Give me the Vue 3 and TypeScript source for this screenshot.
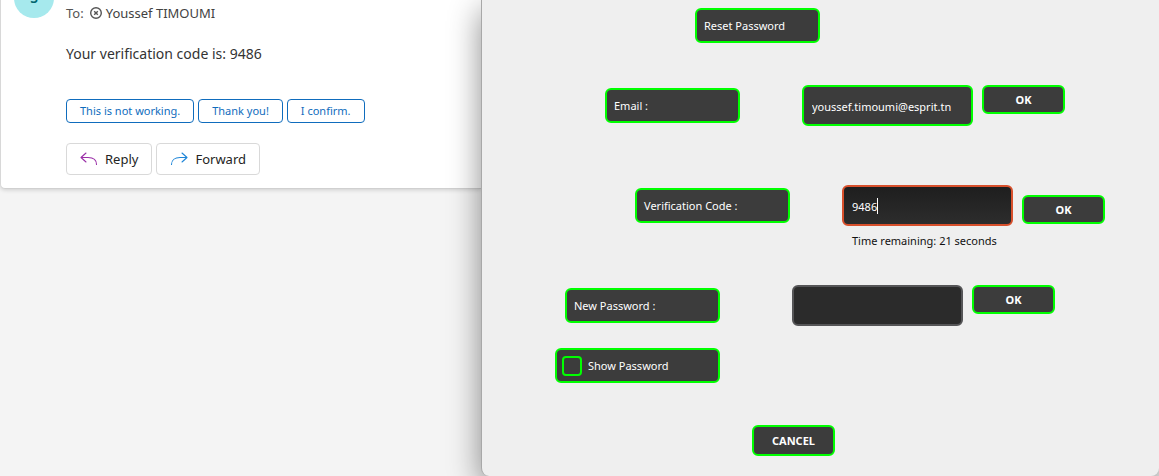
<script setup lang="ts">
import { ref } from 'vue'

const suggestions: string[] = ['This is not working.', 'Thank you!', 'I confirm.']
const email = ref('youssef.timoumi@esprit.tn')
const code = ref('9486')
const password = ref('')
const showPassword = ref(false)
const remaining = ref(21)
</script>

<template>
  <div class="screen">
    <main class="mail">
      <article class="card">
        <span class="avatar">S</span>
        <div class="message">
          <p class="to">
            <span>To:</span>
            <svg class="presence" viewBox="0 0 12 12" aria-hidden="true">
              <circle cx="6" cy="6" r="5.3" />
              <path d="M4.200 4.200l3.600 3.600M7.800 4.200l-3.600 3.600" />
            </svg>
            <span class="name">Youssef TIMOUMI</span>
          </p>
          <p class="body">Your verification code is: 9486</p>
          <div class="suggestions">
            <button v-for="s in suggestions" :key="s" type="button" class="chip">{{ s }}</button>
          </div>
          <div class="actions">
            <button type="button" class="action">
              <svg class="reply" viewBox="0 0 18 14" aria-hidden="true">
                <path d="M6 1L1 5.500l5 4.500M1 5.500H8c5 0 8.500 2.500 8.500 7" />
              </svg>
              Reply
            </button>
            <button type="button" class="action">
              <svg class="forward" viewBox="0 0 18 14" aria-hidden="true">
                <path d="M12 1l5 4.500-5 4.500M17 5.500H10c-5 0-8.500 2.500-8.500 7" />
              </svg>
              Forward
            </button>
          </div>
        </div>
      </article>
    </main>

    <form class="dialog" @submit.prevent>
      <h1 class="tag title">Reset Password</h1>

      <div class="row email-row">
        <label class="tag" for="email">Email :</label>
        <input id="email" v-model="email" class="field valid" type="text" />
        <button type="button" class="btn">OK</button>
      </div>

      <div class="row code-row">
        <label class="tag wide" for="code">Verification Code :</label>
        <div class="stack">
          <input id="code" v-model="code" class="field active" type="text" />
          <span class="caret" aria-hidden="true"></span>
          <span class="timer">Time remaining: {{ remaining }} seconds</span>
        </div>
        <button type="button" class="btn low">OK</button>
      </div>

      <div class="row password-row">
        <label class="tag wide" for="password">New Password :</label>
        <input id="password" v-model="password" class="field" :type="showPassword ? 'text' : 'password'" />
        <button type="button" class="btn">OK</button>
      </div>

      <label class="tag show">
        <input v-model="showPassword" class="check" type="checkbox" />
        Show Password
      </label>

      <button type="button" class="btn cancel">CANCEL</button>
    </form>
  </div>
</template>

<style>
body {
  margin: 0;
  background: #f4f4f4;
}
</style>

<style scoped>
* {
  box-sizing: border-box;
}

.screen {
  display: grid;
  grid-template-columns: 481fr 678fr;
  min-height: 100vh;
  overflow: hidden;
  font-family: "Noto Sans", "Open Sans", sans-serif;
}

button,
input {
  font-family: inherit;
}

.mail {
  background: #f4f4f4;
}

.card {
  display: flex;
  gap: 12px;
  height: 189px;
  padding-left: 13px;
  background: #fff;
  border-left: 1px solid #d8d8d8;
  border-bottom: 1px solid #d0d0d0;
  border-radius: 0 0 0 5px;
  box-shadow: 0 1px 4px rgba(0, 0, 0, 0.16);
}

.avatar {
  flex: none;
  width: 40px;
  height: 40px;
  margin-top: -22px;
  border-radius: 50%;
  background: #a6e9ed;
  color: #00666d;
  font-size: 14px;
  font-weight: 600;
  line-height: 40px;
  text-align: center;
}

.message {
  color: #333;
}

.to {
  display: flex;
  align-items: center;
  margin: 3px 0 0;
  font-size: 13px;
  line-height: 20px;
  color: #555;
}

.presence {
  width: 12px;
  height: 12px;
  margin: 0 4px 0 6px;
  fill: none;
  stroke: #555;
  stroke-width: 1.4;
}

.name {
  color: #424242;
}

.body {
  margin: 20px 0 0;
  font-size: 14px;
  line-height: 22px;
}

.suggestions,
.actions {
  display: flex;
  gap: 4px;
}

.suggestions {
  margin-top: 34px;
}

.chip {
  height: 24px;
  padding: 0 13px;
  background: #fff;
  border: 1px solid #0f6cbd;
  border-radius: 4px;
  color: #0f6cbd;
  font-size: 11px;
  line-height: 20px;
}

.actions {
  margin-top: 20px;
}

.action {
  display: flex;
  align-items: center;
  gap: 7px;
  height: 32px;
  padding: 0 13px;
  background: #fff;
  border: 1px solid #d9d9d9;
  border-radius: 4px;
  color: #242424;
  font-size: 13px;
}

.action svg {
  width: 18px;
  height: 14px;
  fill: none;
  stroke-width: 1.1;
  stroke-linecap: round;
  stroke-linejoin: round;
}

.reply {
  stroke: #9b30a8;
}

.forward {
  stroke: #1f86d8;
}

.dialog {
  position: relative;
  display: flex;
  flex-direction: column;
  align-items: flex-start;
  padding-top: 8px;
  background: #efefef;
  border-left: 1px solid #a8a8a8;
  border-radius: 0 0 8px 8px;
  box-shadow: 0 10px 32px rgba(0, 0, 0, 0.45);
  font-size: 11px;
}

.row {
  display: flex;
  align-items: flex-start;
}

.tag {
  display: flex;
  align-items: center;
  width: 135px;
  height: 35px;
  padding: 0 7px;
  background: #3c3c3c;
  border: 2px solid #00ff00;
  border-radius: 6px;
  color: #fff;
  font-size: 11px;
  font-weight: 400;
}

.row .tag {
  margin-top: 3px;
}

.title {
  width: 125px;
  margin: 0 0 0 213px;
}

.wide {
  width: 155px;
}

.field {
  width: 171px;
  height: 41px;
  padding: 2px 8px 0;
  background: #2b2b2b;
  border: 2px solid #555557;
  border-radius: 6px;
  outline: none;
  color: #fff;
  font-size: 11px;
}

.valid {
  background: #3c3c3c;
  border-color: #00ff00;
}

.active {
  background: linear-gradient(#1e1e1e, #2d2d2d);
  border-color: #d8502c;
}

.btn {
  width: 83px;
  height: 29px;
  padding: 0;
  background: #3c3c3c;
  border: 2px solid #00ff00;
  border-radius: 6px;
  color: #fff;
  font-size: 11px;
  font-weight: 700;
}

.row .btn {
  margin-left: 9px;
}

.row .low {
  margin-top: 10px;
}

.email-row {
  margin: 42px 0 0 123px;
}

.email-row .field {
  margin-left: 62px;
}

.code-row {
  margin: 59px 0 0 153px;
}

.stack {
  position: relative;
  display: flex;
  flex-direction: column;
  width: 171px;
  margin-left: 52px;
}

.caret {
  position: absolute;
  top: 13px;
  left: 35px;
  width: 1px;
  height: 16px;
  background: #fff;
}

.timer {
  padding: 6px 0 0 10px;
  color: #111;
  line-height: 18px;
  white-space: nowrap;
}

.password-row {
  margin: 35px 0 0 83px;
}

.password-row .field {
  margin-left: 72px;
}

.show {
  gap: 6px;
  width: 165px;
  margin: 22px 0 0 73px;
  padding: 0 5px;
}

.check {
  appearance: none;
  width: 20px;
  height: 20px;
  margin: 0;
  border: 2px solid #00ff00;
  border-radius: 4px;
}

.cancel {
  height: 31px;
  margin: 42px 0 20px 270px;
}
</style>
